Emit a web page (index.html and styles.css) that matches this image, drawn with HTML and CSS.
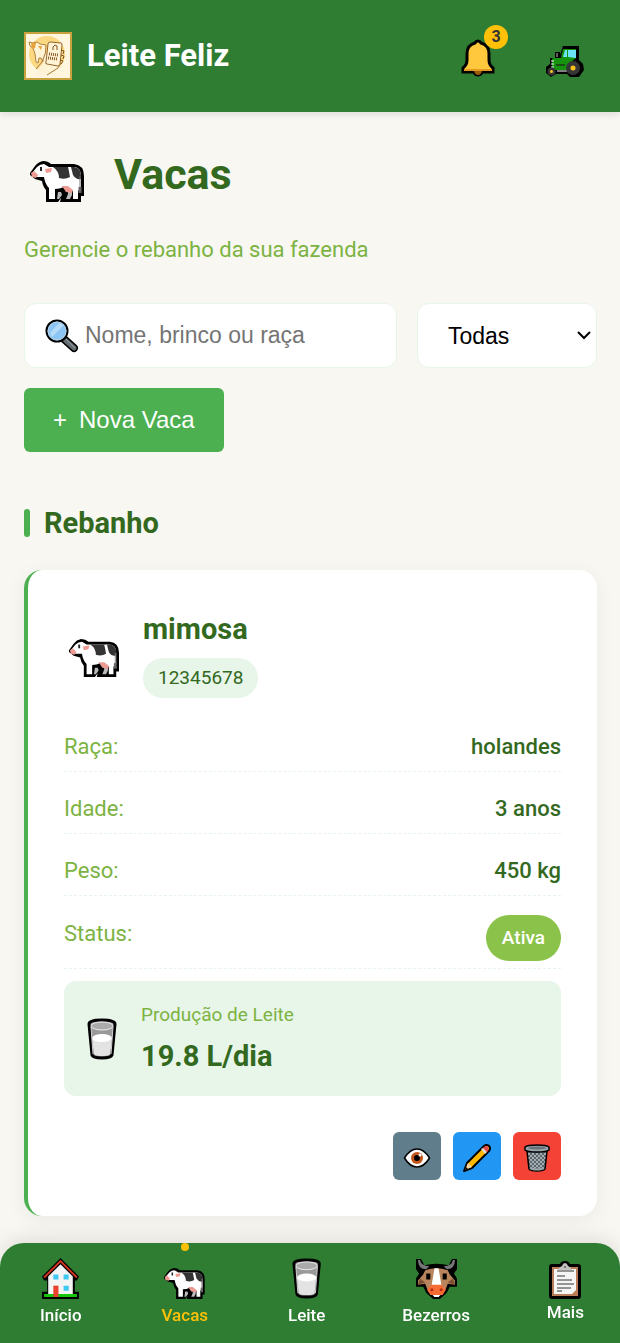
FILE: index.html
```html
<!DOCTYPE html>
<html lang="pt-BR">
<head>
<meta charset="utf-8">
<meta name="viewport" content="width=device-width, initial-scale=1">
<title>Leite Feliz</title>
<link rel="stylesheet" href="styles.css">
</head>
<body>
<svg class="sprite" aria-hidden="true">
  <defs>
    <pattern id="mesh" width="4" height="4" patternUnits="userSpaceOnUse"><path d="M0 0l4 4M4 0L0 4" stroke="#a3adb2" stroke-width="1"/></pattern>
    <symbol id="cow" viewBox="0 0 54 41">
      <path d="M0 12 5 5q3-4 8-5 5 0 8 3h23q10 1 10 12v20h-3v6H30l1-4-3 4H16V29q-3-3-4-9L5 18l-5-4z"/>
      <path d="M2 12 7 6q3-3 7-3l5 3h24q8 0 8 9v12l-3 3v8h-5V30l-9-4q-4 2-9 2v10h-6V27q-4-4-5-11l-8 0z" fill="#fff"/>
      <path d="M28 31h3l1 3-3 4h-2zM38 30h4v4l-2 4h-4l2-5z" fill="#bbb"/>
      <path d="M23 6h15q1 4 2 10-5 3-11 1 0-7-6-11zM41 6h3q7 1 7 9v3q-5 1-8-4z" fill="#333"/>
      <path d="M15 8l7-1-1 4-5 1zM1 12l3-2 4 4-2 3-4-1zM32 25l6 0 5 4-1 3-6-1z" fill="#ed9a93"/>
      <path d="M11 6v4" stroke="#222" stroke-width="2"/>
      <path d="M50 15v12" stroke="#777" stroke-width="1"/><path d="M50 26v6" stroke="#666" stroke-width="3"/>
    </symbol>
    <symbol id="milk" viewBox="0 0 30 42">
      <path d="M2 6Q2 2 15 2t13 4l-3 31q-1 3-10 3T5 37z" fill="#999" stroke="#000" stroke-width="3" stroke-linejoin="round"/>
      <ellipse cx="15" cy="8" rx="11" ry="4" fill="#aaa" stroke="#eee" stroke-width="1"/>
      <path d="M5 20h20l-2 16q-2 2-8 2t-8-2z" fill="#e3e3e3"/>
      <ellipse cx="15" cy="20" rx="10" ry="4" fill="#fff"/>
      <path d="M4 9 6 36M26 9 24 36" stroke="#d2d2d2" stroke-width="1"/>
    </symbol>
  </defs>
</svg>

<header class="topbar">
  <div class="brand">
    <svg class="logo" viewBox="0 0 48 48" role="img" aria-label="Logotipo Leite Feliz">
      <rect x="1" y="1" width="46" height="46" fill="#fff6df" stroke="#c9a13f" stroke-width="2"/>
      <circle cx="23" cy="22" r="18" fill="#fbd983"/>
      <path d="M5 10l4 1 4-1 3 2 6 1-1 12-2 5-2-4-2 0-1 5-2-1-1-8-2-6-3-2z" fill="#fff3d6" stroke="#b3803d" stroke-width="1"/>
      <path d="M7 11h5l-1 5-3 1zM14 14l4 0-1 4z" fill="#e8a13c"/>
      <path d="M13 42l1-5 5-6 2-9 4 1-1 9 12 2 3-2-2 4-10 6-6 1z" fill="#fff3d6"/>
      <path d="M12 37l6-7 3-8M23 43l11-7 3-5" fill="none" stroke="#a9763a" stroke-width="1"/>
      <path d="M26 10l11 1q1 0 1 2l-2 19q0 2-2 2l-11-2q-2 0-1-2l2-18q0-2 2-2z" fill="#fff3d6" stroke="#94652c" stroke-width="1"/>
      <path d="M29 18v-3l2-2 2 1v4M37 18l3 1-1 3M37 23l3 1-1 3M36 28l3 1-2 3" fill="none" stroke="#7d5225" stroke-width="1"/>
      <path d="M25 22l9 1M24 26l9 1" stroke="#8a5c29" stroke-width="3" stroke-dasharray="1 1"/>
    </svg>
    <span class="brand-name">Leite Feliz</span>
  </div>
  <div class="top-actions">
    <button class="icon-btn" type="button" aria-label="Notificações">
      <svg class="bell" viewBox="0 0 34 38" aria-hidden="true">
        <path d="M17 2q2 0 3 2 8 2 8 11v6q0 5 4 8v4H21q-1 3-4 3t-4-3H2v-4q4-3 4-8v-6Q6 6 14 4q1-2 3-2z" fill="#ffc83d" stroke="#000" stroke-width="3"/>
        <path d="M3 30h28v2H3z" fill="#e19b25"/><path d="M13 32h8q-1 4-4 4t-4-4z" fill="#9b5b0a"/>
      </svg>
      <span class="count">3</span>
    </button>
    <button class="icon-btn" type="button" aria-label="Fazenda">
      <svg class="tractor" viewBox="0 0 38 32" aria-hidden="true">
        <path d="M4 12h5V6h5v3l3-9h16v14l4 4 1 6-5 7H24l-3-3H10l-5 3-5-4V21l4-3z"/>
        <path d="M15 11l2-8h13v9l-5 4-4 8H6V13q0-1 3-1h7z" fill="#15930f"/>
        <path d="M17 11l2-7h2v7zM22 4h8v8l-8-1z" fill="#6be5f5"/>
        <path d="M11 7v4" stroke="#bbb" stroke-width="1"/>
        <path d="M5 15h3M5 18h3M5 21h3M11 25h10" stroke="#fff" stroke-width="1"/>
        <path d="M10 19h9" stroke="#164d13" stroke-width="2"/>
        <circle cx="27" cy="22" r="7" fill="#363636"/><circle cx="27" cy="22" r="2.500" fill="#fcc21b"/>
        <circle cx="5.500" cy="25.500" r="4" fill="#363636"/><circle cx="5.500" cy="25.500" r="1.500" fill="#fcc21b"/>
      </svg>
    </button>
  </div>
</header>

<main class="page">
  <div class="page-title">
    <svg class="title-cow" viewBox="0 0 54 41" aria-hidden="true"><use href="#cow"/></svg>
    <h1>Vacas</h1>
  </div>
  <p class="subtitle">Gerencie o rebanho da sua fazenda</p>

  <form class="filters">
    <label class="search">
      <svg class="lens" viewBox="0 0 34 34" aria-hidden="true">
        <path d="M19 20l10 9" stroke="#000" stroke-width="8" stroke-linecap="round"/>
        <path d="M20 21l9 8" stroke="#656e73" stroke-width="5" stroke-linecap="round"/>
        <path d="M21 20l9 9" stroke="#929ba0" stroke-width="1"/>
        <circle cx="12" cy="12" r="10.500" fill="#8cc5f3" stroke="#000" stroke-width="2"/>
        <circle cx="12" cy="12" r="9" fill="none" stroke="#b5cfe3" stroke-width="1"/>
        <path d="M5 14L14 4l5 2L7 18z" fill="#b5daf8"/>
      </svg>
      <input type="search" placeholder="Nome, brinco ou raça" aria-label="Buscar vaca">
    </label>
    <div class="select-wrap">
      <select aria-label="Filtrar por status"><option>Todas</option><option>Ativa</option></select>
      <svg class="chevron" viewBox="0 0 14 9" aria-hidden="true"><path d="M1 1l6 6 6-6" fill="none" stroke="#000" stroke-width="2"/></svg>
    </div>
    <button class="add" type="button"><span>+</span><span>Nova Vaca</span></button>
  </form>

  <h2 class="section-title">Rebanho</h2>

  <article class="card">
    <div class="card-head">
      <svg class="card-cow" viewBox="0 0 54 41" aria-hidden="true"><use href="#cow"/></svg>
      <div>
        <h3>mimosa</h3>
        <span class="tag">12345678</span>
      </div>
    </div>
    <dl class="facts">
      <div><dt>Raça:</dt><dd>holandes</dd></div>
      <div><dt>Idade:</dt><dd>3 anos</dd></div>
      <div><dt>Peso:</dt><dd>450 kg</dd></div>
      <div><dt>Status:</dt><dd class="status">Ativa</dd></div>
    </dl>
    <div class="yield">
      <svg class="milk" viewBox="0 0 30 42" aria-hidden="true"><use href="#milk"/></svg>
      <div>
        <p class="yield-label">Produção de Leite</p>
        <p class="yield-value">19.8 L/dia</p>
      </div>
    </div>
    <div class="card-actions">
      <button class="view" type="button" aria-label="Ver">
        <svg viewBox="0 0 28 28" aria-hidden="true">
          <path d="M1.500 14Q7 5 14 5t12.500 9Q21 23 14 23T1.500 14z" fill="#fff" stroke="#000" stroke-width="1.500"/>
          <circle cx="14" cy="14" r="6" fill="#c4561b"/><circle cx="14" cy="14" r="3" fill="#000"/><circle cx="17" cy="11" r="1.500" fill="#fff"/>
        </svg>
      </button>
      <button class="edit" type="button" aria-label="Editar">
        <svg viewBox="0 0 28 28" aria-hidden="true">
          <path d="M1 27l3-8L21 2q3-2 5 0t0 5L9 24z" fill="#ffb900" stroke="#000" stroke-width="2" stroke-linejoin="round"/>
          <path d="M2 26l3-7 4 4z" fill="#f3d4a5"/><path d="M2 26l1-3 2 2z"/>
          <path d="M18 5l2-1 4 4-2 2z" fill="#ddd"/><path d="M21 3q3-2 4 0t0 4l-1 1-4-4z" fill="#e74856"/>
        </svg>
      </button>
      <button class="remove" type="button" aria-label="Excluir">
        <svg viewBox="0 0 28 28" aria-hidden="true">
          <path d="M4 7h20l-2 18q-1 2-8 2t-8-2z" fill="#5b666c" stroke="#000" stroke-width="1.500"/>
          <path d="M5 9h18l-2 15H7z" fill="url(#mesh)"/>
          <path d="M7 24q7 3 14 0" fill="none" stroke="#9aa5aa" stroke-width="2"/>
          <path d="M2 3q2-2 12-2t12 2v3q-2 2-12 2T2 6z" fill="#97a3a8" stroke="#000" stroke-width="1.500"/>
          <ellipse cx="14" cy="4" rx="9" ry="1.500" fill="#68747a"/>
        </svg>
      </button>
    </div>
  </article>
</main>

<nav class="tabs" aria-label="Principal">
  <a href="#inicio">
    <svg viewBox="0 0 40 40" aria-hidden="true">
      <path d="M20 0L2 18l2 4h3v11H2v7h36v-7h-4V22h2l2-4z"/>
      <path d="M20 6L8 18v17h24V18z" fill="#f4f4f4"/>
      <path d="M4 19L20 3l16 16" fill="none" stroke="#cf3523" stroke-width="2"/>
      <path d="M4 35h32v3H4z" fill="#16c60c"/><path d="M13 27h5v11h-5z" fill="#e8412d"/>
      <path d="M13 16h5v5h-5zM23 16h5v5h-5zM23 27h5v5h-5z" fill="#40c8f4"/>
    </svg>
    <span>Início</span>
  </a>
  <a class="active" href="#vacas" aria-current="page">
    <svg class="tab-cow" viewBox="0 0 54 41" aria-hidden="true"><use href="#cow"/></svg>
    <span>Vacas</span>
  </a>
  <a href="#leite">
    <svg viewBox="0 0 30 42" aria-hidden="true"><use href="#milk"/></svg>
    <span>Leite</span>
  </a>
  <a href="#bezerros">
    <svg viewBox="0 0 40 40" aria-hidden="true">
      <path d="M0 1h5l3 6q12-3 24 0l3-6h5v10l-3 4 3 5v8h-7l-3 6q-6 6-7 6h-6q-1 0-7-6l-3-6H0v-8l3-5-3-4z"/>
      <path d="M2 2q0 9 8 9l3-3Q5 8 4 2zM38 2q0 9-8 9l-3-3q8 0 9-6z" fill="#777"/>
      <path d="M9 12q11-4 22 0l2 4 5 6v4l-7-1-3 8H12l-3-8-7 1v-4l5-6z" fill="#b9845b"/>
      <path d="M2 26l2-6 5 4zM38 26l-2-6-5 4z" fill="#7d4f32"/>
      <path d="M18 10h4l3 18H15z" fill="#fff"/><path d="M14 34h12l-4 4h-4z" fill="#fff"/>
      <path d="M15 26h10l4 5-3 5H14l-3-5z" fill="#f76b35"/>
      <circle cx="15.500" cy="31" r="1.500" fill="#b72d12"/><circle cx="24.500" cy="31" r="1.500" fill="#b72d12"/>
      <path d="M10 15h4v6h-4zM26 15h4v6h-4z"/>
    </svg>
    <span>Bezerros</span>
  </a>
  <button class="more" type="button">
    <svg viewBox="0 0 32 38" aria-hidden="true">
      <path d="M3 3h8q1-3 5-3t5 3h8q3 0 3 3v29q0 3-3 3H3q-3 0-3-3V6q0-3 3-3z"/>
      <path d="M3 6h26v29H3z" fill="#b97d57"/><path d="M5 8h22v21l-4 4H5z" fill="#f5f5f5"/>
      <path d="M9 9q1-3 4-4 1-3 3-3t3 3q3 1 4 4z" fill="#c1c1c1"/><circle cx="16" cy="6" r="1" fill="#725345"/>
      <path d="M8 10h17M8 15h8M8 19h15M8 23h17M8 27h14M8 30h5" stroke="#333" stroke-width="1"/>
    </svg>
    <span>Mais</span>
  </button>
</nav>
</body>
</html>
```
FILE: styles.css
```css
* { box-sizing: border-box; }

body {
  margin: 0;
  background: #f8f7f1;
  color: #33691e;
  font-family: Roboto, sans-serif;
}

h1, h2, h3, p, dl, dd { margin: 0; }
button { border: 0; padding: 0; cursor: pointer; }
svg { display: block; }
.sprite { position: absolute; width: 0; height: 0; }

.topbar {
  display: flex;
  align-items: center;
  justify-content: space-between;
  padding: 24px;
  min-height: 112px;
  background: #2e7d32;
  box-shadow: 0 2px 8px rgba(0, 0, 0, 0.12);
}
.brand { display: flex; align-items: center; gap: 15px; }
.logo { width: 48px; height: 48px; }
.brand-name { padding-bottom: 2px; color: #fff; font-size: 31px; font-weight: 700; }
.top-actions { display: flex; gap: 24px; }
.icon-btn {
  position: relative;
  display: grid;
  place-items: center;
  width: 62px;
  height: 62px;
  background: none;
}
.bell { width: 34px; height: 38px; margin: 4px 2px 0 0; }
.tractor { width: 38px; height: 32px; margin-top: 12px; }
.count {
  position: absolute;
  top: 0;
  right: 2px;
  width: 24px;
  border-radius: 50%;
  background: #ffc107;
  color: #333;
  font-family: Roboto, sans-serif;
  font-size: 16px;
  font-weight: 700;
  line-height: 24px;
}

.page { padding: 32px 23px 127px 24px; }
.page-title { display: flex; align-items: center; gap: 30px; padding-left: 6px; }
.title-cow { width: 54px; height: 41px; margin-top: 14px; }
h1 { font-size: 43px; line-height: 61px; }
.subtitle { margin-top: 27px; color: #7cb342; font-size: 22px; line-height: 36px; }

.filters { display: flex; flex-wrap: wrap; gap: 20px; margin-top: 35px; }
.search {
  display: flex;
  flex: 1 1 280px;
  align-items: center;
  gap: 6px;
  height: 65px;
  padding: 0 20px;
  border: 1px solid #e8f5e9;
  border-radius: 12px;
  background: #fff;
}
.lens { flex: none; width: 34px; height: 34px; }
.search input {
  width: 100%;
  min-width: 0;
  padding: 0;
  border: 0;
  outline: 0;
  background: none;
  font: 23px "Liberation Sans", Arial, sans-serif;
}
.search input::placeholder { color: #757575; }
.select-wrap { position: relative; flex: 0 0 180px; }
select {
  appearance: none;
  width: 100%;
  height: 65px;
  padding: 0 30px;
  border: 1px solid #e8f5e9;
  border-radius: 12px;
  background: #fff;
  color: #000;
  font: 23px "Liberation Sans", Arial, sans-serif;
}
.chevron {
  position: absolute;
  top: 28px;
  right: 6px;
  width: 14px;
  height: 9px;
  pointer-events: none;
}
.add {
  display: flex;
  align-items: center;
  gap: 12px;
  height: 64px;
  padding: 0 29px;
  border-radius: 6px;
  background: #4caf50;
  color: #fff;
  font: 24px "Liberation Sans", Arial, sans-serif;
}

.section-title {
  display: flex;
  align-items: center;
  gap: 14px;
  margin-top: 48px;
  font-size: 29px;
  line-height: 46px;
}
.section-title::before {
  content: "";
  width: 6px;
  height: 28px;
  border-radius: 3px;
  background: #4caf50;
}

.card {
  margin-top: 24px;
  padding: 36px;
  border-left: 4px solid #4caf50;
  border-radius: 18px;
  background: #fff;
  box-shadow: 0 4px 20px rgba(0, 0, 0, 0.06);
}
.card-head { display: flex; align-items: center; gap: 24px; padding-left: 5px; }
.card-cow { width: 50px; height: 38px; margin-top: 12px; }
h3 { font-size: 29px; line-height: 46px; }
.tag {
  display: block;
  margin-top: 6px;
  padding: 0 15px;
  border-radius: 20px;
  background: #e8f5e9;
  font-size: 19px;
  line-height: 40px;
}
.facts { display: grid; gap: 12px; margin-top: 24px; font-size: 22px; line-height: 38px; }
.facts div {
  display: flex;
  align-items: flex-start;
  justify-content: space-between;
  height: 50px;
  padding-top: 6px;
  border-bottom: 1px dashed #e8f5e9;
}
.facts div:last-child { height: auto; padding: 7px 0; }
.facts dt { color: #7cb342; }
.facts dd { font-weight: 500; }
.facts .status {
  padding: 0 16px;
  border-radius: 23px;
  background: #8bc34a;
  color: #fff;
  font-size: 19px;
  line-height: 46px;
}
.yield {
  display: flex;
  align-items: center;
  gap: 24px;
  margin-top: 12px;
  padding: 16px 23px;
  border-radius: 12px;
  background: #e8f5e9;
}
.milk { width: 30px; height: 42px; }
.yield-label { color: #7cb342; font-size: 19px; line-height: 35px; }
.yield-value { font-size: 29px; font-weight: 700; line-height: 48px; }
.card-actions { display: flex; justify-content: flex-end; gap: 12px; margin-top: 36px; }
.card-actions button {
  display: grid;
  place-items: center;
  width: 48px;
  height: 48px;
  padding-top: 3px;
  border-radius: 6px;
}
.card-actions svg { width: 28px; height: 28px; }
.view { background: #607d8b; }
.edit { background: #2196f3; }
.remove { background: #f44336; }

.tabs {
  position: fixed;
  right: 0;
  bottom: 0;
  left: 0;
  display: flex;
  justify-content: space-between;
  height: 100px;
  padding: 15px 36px 0 40px;
  border-radius: 24px 24px 0 0;
  background: #2e7d32;
  box-shadow: 0 -4px 20px rgba(0, 0, 0, 0.1);
}
.tabs a, .more {
  position: relative;
  display: flex;
  flex-direction: column;
  align-items: center;
  gap: 3px;
  background: none;
  color: #fff;
  font: 500 17px/26px Roboto, sans-serif;
  text-decoration: none;
}
.tabs svg { height: 41px; }
.tabs .tab-cow { height: 31px; margin-top: 10px; }
.tabs .active { padding: 0 3px; color: #ffc107; }
.tabs .more { gap: 0; }
.tabs .more svg { height: 38px; margin-top: 3px; }
.active::before {
  content: "";
  position: absolute;
  top: -15px;
  width: 8px;
  height: 8px;
  border-radius: 50%;
  background: #ffc107;
}
```
